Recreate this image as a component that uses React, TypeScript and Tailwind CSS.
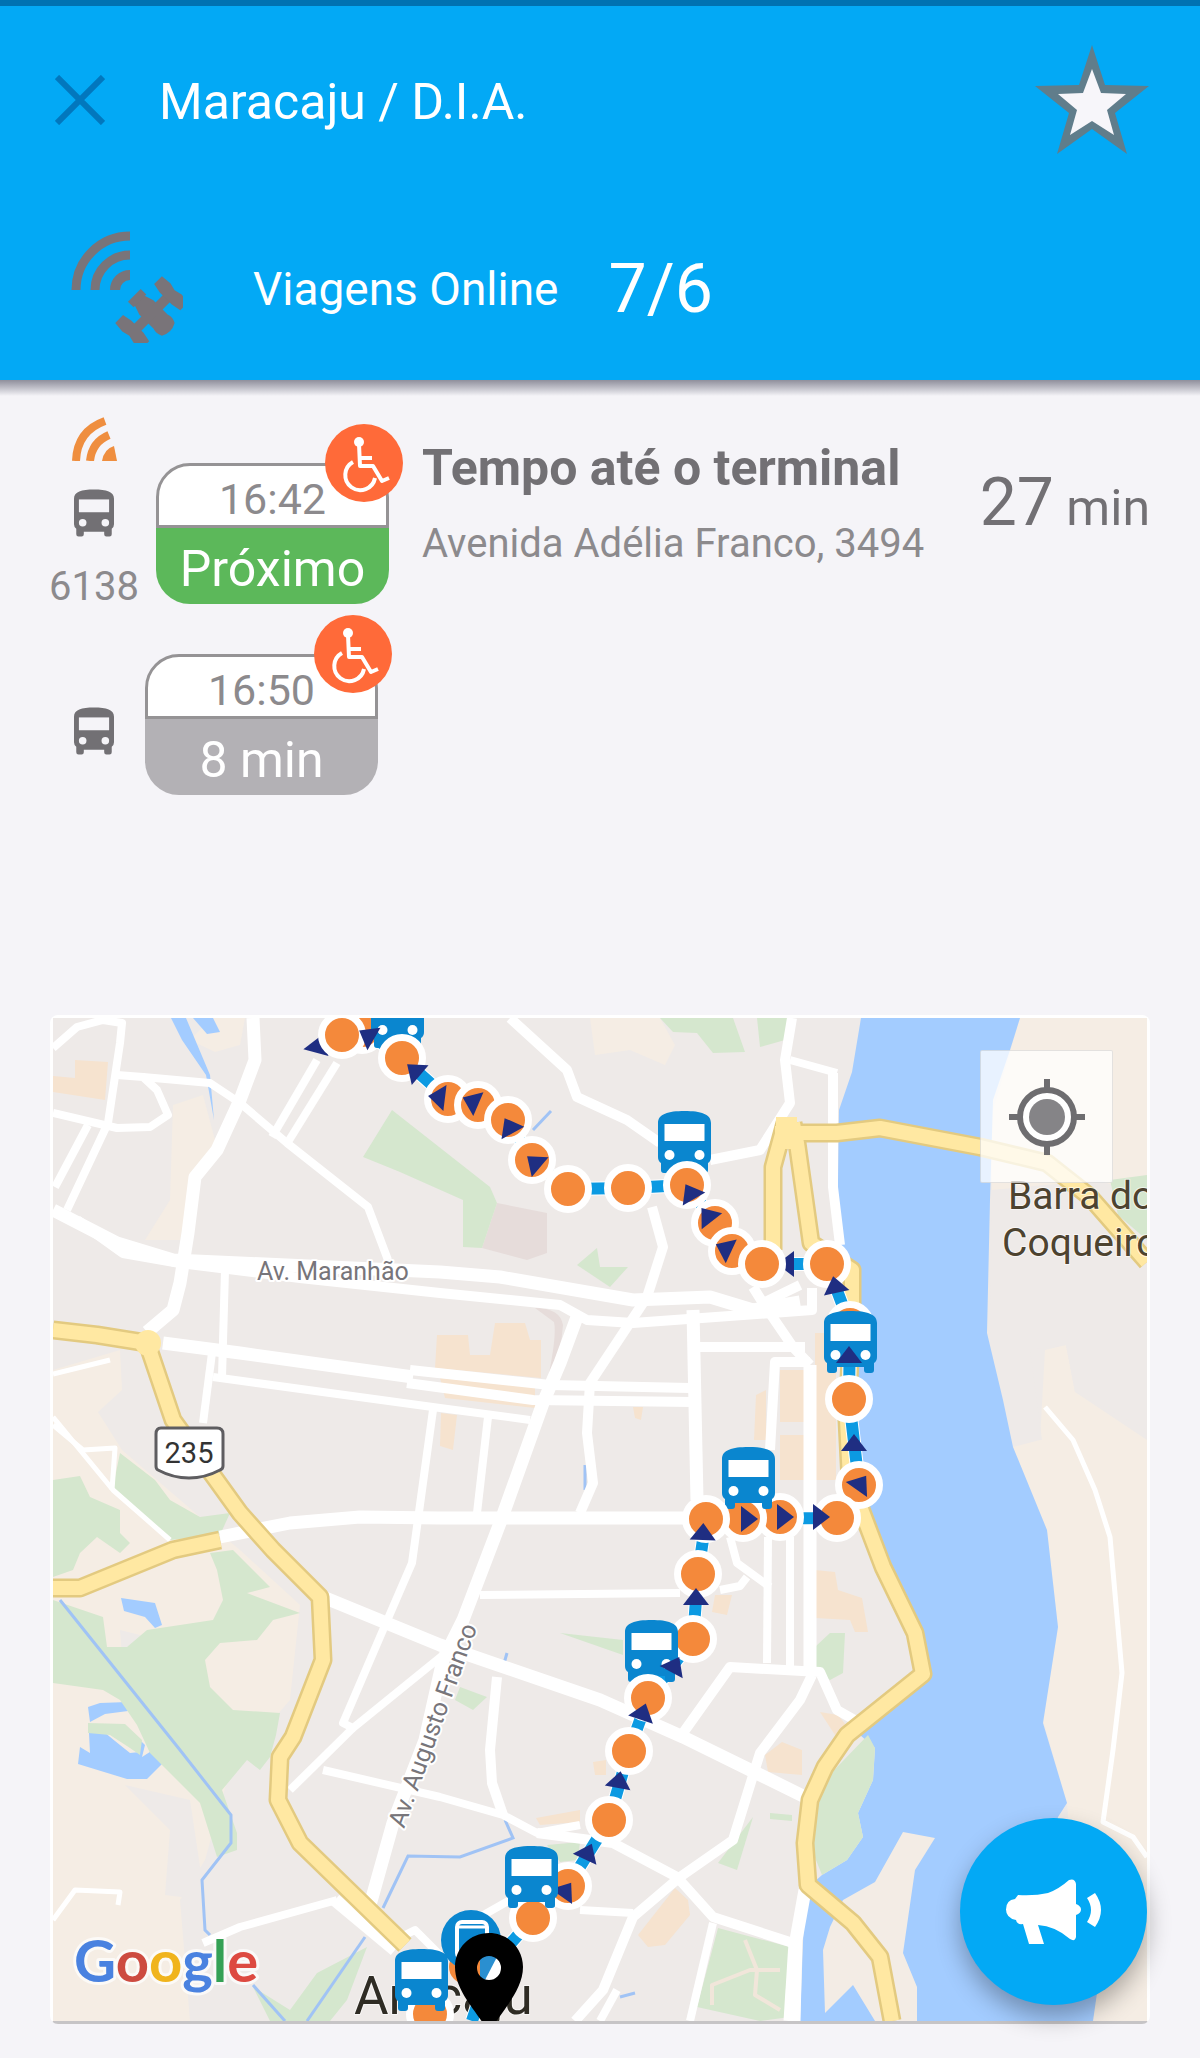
import { useState } from "react";

type Point = [number, number];

// Map drawing units: the visible window starts at 53,1018.
const MAP_VIEWBOX = "53 1018 1094 1003";

const sand = [
  "53,1370 120,1350 122,1390 98,1412 122,1450 200,1517 240,1550 300,1605 290,1700 230,1770 205,1860 180,1900 190,2021 53,2021",
  "1020,1018 1147,1018 1147,1200 1100,1180 992,1190 990,1120",
  "1013,1447 1040,1440 1045,1350 1066,1345 1075,1392 1147,1440 1147,2021 1085,2021 1067,1803 1043,1720 1058,1627 1047,1530",
  "173,1105 203,1095 215,1140 190,1200 180,1240 145,1240 170,1200",
  "190,1040 212,1018 245,1018 240,1045 215,1052",
  "590,1018 660,1018 675,1045 665,1065 630,1050 595,1055",
];

const urban = [
  "992,1210 1147,1215 1147,1430 1075,1392 1066,1345 1030,1350 1042,1440 1010,1440 990,1340",
  "120,1630 160,1640 190,1700 200,1800 150,1750 125,1690",
  "125,1785 190,1800 205,1900 165,1895 170,1830",
];

const peach = [
  "75,1060 108,1062 105,1100 53,1092 53,1076 75,1078",
  "437,1335 468,1335 470,1355 490,1355 495,1323 525,1323 530,1340 541,1340 541,1378 435,1368",
  "440,1378 535,1387 535,1408 445,1398",
  "441,1413 457,1415 453,1450 440,1446",
  "756,1395 766,1390 766,1440 754,1440",
  "780,1370 805,1370 805,1422 780,1422",
  "780,1435 805,1435 805,1480 780,1480",
  "815,1333 836,1333 836,1480 815,1480",
  "815,1570 835,1572 838,1590 862,1598 868,1632 855,1632 850,1620 815,1618",
  "715,1595 732,1595 727,1615 712,1612",
  "536,1818 580,1810 580,1822 540,1825",
  "593,1762 606,1760 606,1775 595,1775",
  "765,1755 782,1742 802,1750 802,1775 768,1772",
  "675,1888 688,1900 690,1915 665,1945 648,1947 638,1935",
  "820,1712 838,1715 850,1730 835,1735",
  "633,1407 643,1407 641,1420 635,1418",
];

const green = [
  "392,1110 490,1187 497,1203 482,1248 463,1247 463,1200 400,1172 363,1157",
  "660,1018 733,1018 745,1052 713,1053 697,1033 673,1032",
  "757,1018 788,1018 785,1040 760,1047",
  "577,1265 597,1248 600,1267 628,1267 610,1287",
  "53,1480 80,1476 90,1497 120,1510 120,1533 130,1543 120,1553 97,1537 80,1553 73,1570 53,1577",
  "120,1453 155,1480 170,1500 200,1517 230,1513 220,1535 170,1540 113,1487",
  "210,1553 233,1550 270,1587 247,1593 300,1613 273,1620 257,1640 220,1643 205,1660 210,1687 233,1710 280,1713 276,1735 270,1757 260,1770 247,1760 222,1790 237,1833 237,1850 217,1857 200,1803 150,1753 137,1725 120,1700 103,1690 53,1683 53,1600 103,1617 107,1647 127,1647 147,1630 213,1620 223,1600 217,1570",
  "88,1723 125,1724 142,1740 140,1755 130,1748 110,1735 88,1733",
  "317,1973 367,1947 347,2000 330,2021 270,2021 253,1987 290,2010",
  "718,1928 790,1947 790,2017 760,2021 697,2007",
  "753,1817 737,1870 718,1863",
  "547,1845 580,1842 578,1860 560,1862",
  "560,1633 623,1640 623,1655",
  "460,1687 487,1697 473,1710 455,1700",
  "830,1633 845,1633 843,1673 830,1680 815,1670 815,1647",
  "868,1735 875,1748 873,1780 858,1813 863,1837 847,1860 822,1875 808,1840 815,1790",
  "770,1813 792,1815 792,1821 770,1819",
  "1110,1180 1147,1175 1147,1240 1118,1215",
];

const water = [
  "861,1018 852,1072 839,1110 837,1250 852,1300 848,1400 855,1500 875,1560 922,1640 926,1680 860,1735 875,1748 873,1780 858,1813 863,1837 847,1860 822,1875 805,1890 800,2021 1093,2021 1097,1993 1040,1900 1058,1817 1067,1803 1043,1723 1058,1627 1047,1530 1013,1447 1003,1400 987,1333 990,1200 993,1100 1010,1050 1020,1018",
  "121,1598 155,1603 162,1625 155,1628 145,1617 124,1611",
  "88,1707 100,1703 128,1702 128,1711 105,1714 90,1722",
  "80,1747 90,1753 89,1733 104,1732 115,1741 130,1753 140,1752 133,1733 145,1745 142,1757 153,1750 163,1763 147,1779 127,1779 78,1764",
  "171,1018 186,1018 210,1075 214,1120 206,1075 182,1040",
  "193,1018 213,1018 220,1032 207,1034",
];

const roads: { width: number; lines: string[] }[] = [
  {
    width: 5,
    lines: [
      "53,1417 113,1490 170,1540",
      "53,1425 83,1450 115,1448 112,1490",
      "1045,1407 1073,1440 1095,1490 1110,1537 1122,1673 1113,1750 1103,1822 1133,1837 1147,1857",
      "53,1920 75,1890 120,1892 118,1905",
      "53,1374 110,1360",
    ],
  },
  {
    width: 8,
    lines: [
      "53,1048 77,1027 103,1020 122,1023 120,1043 108,1123 67,1210",
      "53,1113 117,1128 150,1127 168,1115 157,1090 143,1077 117,1075",
      "143,1077 210,1083 240,1103 287,1143 368,1207 388,1260",
      "88,1125 55,1187",
      "317,1060 272,1137",
      "337,1063 288,1142",
      "225,1270 222,1377",
      "212,1353 203,1423",
      "213,1377 440,1408 530,1420",
      "433,1410 412,1563 383,1630 343,1723 353,1728 443,1655",
      "353,1728 290,1790",
      "488,1417 477,1513",
      "323,1770 440,1797 503,1815 537,1833 580,1825",
      "480,1595 680,1593",
      "580,1910 633,1913",
      "713,1923 690,2021",
      "790,1537 790,1667",
      "768,1537 767,1663",
      "730,1537 737,1563 770,1587",
      "720,1590 740,1586 747,1577",
      "337,1900 240,1927 203,1943",
      "790,1060 837,1073",
      "480,1917 510,1900",
      "405,1935 415,1930 440,1955",
      "617,1990 600,2021",
    ],
  },
  {
    width: 10,
    lines: [
      "77,1220 123,1253 180,1263 300,1278 440,1293 560,1305 587,1320 633,1323 812,1310 812,1288",
      "407,1383 533,1400 693,1402",
      "410,1370 550,1385 690,1388",
      "537,1833 613,1843 677,1877 713,1917 793,1943",
      "497,1677 490,1750 492,1783 503,1815",
      "812,1675 800,1700 760,1753 733,1840 680,1877 633,1917 603,1990 575,2021",
      "510,1018 567,1070 577,1097 627,1120 660,1143",
      "710,1160 760,1150 790,1103 785,1060 792,1018",
      "652,1207 663,1247 647,1297 590,1383 587,1433 593,1483 580,1513",
      "700,1347 805,1347",
      "810,1362 775,1362 770,1450",
      "683,1733 730,1667 820,1672 837,1710 860,1723",
      "833,1073 833,1187 840,1245",
      "753,1287 763,1303 793,1347 810,1365",
      "763,1303 800,1285",
    ],
  },
  {
    width: 13,
    lines: [
      "253,1018 255,1060 240,1100 217,1150 195,1177 188,1233 180,1283 173,1310 147,1332",
      "53,1210 117,1243 173,1260 240,1263 440,1272 500,1277 633,1300 710,1297 753,1310 800,1302",
      "163,1343 240,1353 413,1377",
      "220,1537 290,1523 360,1517 440,1518 700,1518",
      "577,1317 560,1363 543,1403 500,1523 463,1620 443,1660 425,1740 393,1823 370,1905",
      "323,1597 440,1645 600,1700 683,1737 805,1797",
      "693,1310 697,1500",
      "810,1365 810,1667",
      "795,1943 790,2021",
      "805,1890 796,1940 794,2021",
      "335,1900 395,1950",
    ],
  },
];

const highways = [
  "53,1330 97,1335 147,1343 173,1420 240,1513 273,1550 320,1597 323,1660 293,1737 280,1757 278,1800 300,1843 405,1945",
  "53,1588 80,1588 173,1550 220,1540",
  "775,1133 837,1133 880,1128 980,1147 1047,1163 1090,1197 1147,1262",
  "785,1123 773,1167 773,1250",
  "793,1123 797,1143 811,1243 852,1270 852,1320 847,1420 850,1480 883,1567 915,1633 923,1674 847,1735 825,1767 810,1800 805,1843 808,1885 853,1923 880,1957 892,2021",
];

const streams = [
  "60,1600 180,1750 231,1815 231,1843 202,1880 205,1930 210,1935",
  "307,2021 365,1937",
  "253,1985 285,2021",
  "383,1908 408,1856 460,1857 513,1838 505,1820",
  "533,1130 551,1111",
  "503,1667 507,1653",
  "585,1465 585,1490",
  "620,1997 635,1993",
];

const routeLine =
  "342,1035 372,1036 402,1058 448,1099 478,1105 508,1120 532,1160 568,1189 628,1188 687,1185 715,1223 732,1251 762,1264 827,1264 850,1325 849,1399 859,1485 837,1518 706,1519 698,1574 693,1639 648,1698 629,1751 609,1820 568,1886 533,1918 490,1967 472,2021";

const stopsBelow: Point[] = [
  [362, 1030],
  [850, 1325],
  [780, 1517],
  [743, 1518],
  [693, 1639],
  [568, 1886],
  [533, 1918],
  [430, 2014],
];

const stopsAbove: Point[] = [
  [342, 1035],
  [402, 1058],
  [448, 1099],
  [478, 1105],
  [508, 1120],
  [532, 1160],
  [568, 1189],
  [628, 1188],
  [687, 1185],
  [715, 1223],
  [732, 1251],
  [762, 1264],
  [827, 1264],
  [849, 1399],
  [859, 1485],
  [837, 1518],
  [706, 1519],
  [698, 1574],
  [648, 1698],
  [629, 1751],
  [609, 1820],
];

const buses: Point[] = [
  [371, 986],
  [658, 1111],
  [824, 1311],
  [722, 1447],
  [625, 1620],
  [505, 1846],
  [395, 1949],
];

// x, y, heading in degrees
const hiddenArrows: [number, number, number][] = [
  [318, 1045, 15],
  [786, 1264, -90],
  [566, 1890, 35],
];

const arrows: [number, number, number][] = [
  [367, 1035, -60],
  [414, 1070, -50],
  [437, 1097, -83],
  [471, 1101, -67],
  [509, 1126, -29],
  [534, 1162, -50],
  [690, 1192, -30],
  [707, 1215, -38],
  [724, 1248, -65],
  [835, 1285, -12],
  [849, 1355, 0],
  [854, 1443, 0],
  [861, 1483, 35],
  [821, 1517, 90],
  [785, 1517, 90],
  [749, 1519, 90],
  [703, 1532, 2],
  [696, 1597, 0],
  [675, 1665, 28],
  [643, 1712, 18],
  [619, 1780, 10],
  [588, 1852, 25],
];

const departures = [
  { time: "16:42", status: "Próximo", statusClass: "bg-[#5cb85a]", online: true, vehicle: "6138" },
  { time: "16:50", status: "8 min", statusClass: "bg-[#b3b1b5]", online: false, vehicle: "" },
];

function BusShape({ detail = "#fff" }: { detail?: string }) {
  return (
    <>
      <path d="M0 12C0 3 10 0 26.500 0S53 3 53 12V46Q53 50 50 52V59Q50 62 47 62H43Q40 62 40 59V56H13V59Q13 62 10 62H6Q3 62 3 59V52Q0 50 0 46Z" />
      <path d="M6.500 13H46.500V30H6.500Z" fill={detail} />
      <circle cx="11.500" cy="44" r="5" fill={detail} />
      <circle cx="41.500" cy="44" r="5" fill={detail} />
    </>
  );
}

function BusIcon() {
  return (
    <svg viewBox="0 0 53 62" className="h-12 w-10" fill="#727074" aria-hidden="true">
      <BusShape detail="#f5f4f8" />
    </svg>
  );
}

function SignalIcon() {
  return (
    <svg viewBox="0 0 45 44" className="h-11 w-[45px]" aria-hidden="true">
      <path d="M30 44H45L42 29Q32 32 30 44Z" fill="#ef8e3f" />
      <path d="M18 44Q20 25 37 18M4 44Q5 14 33 4" fill="none" stroke="#ef8e3f" strokeWidth="8" />
    </svg>
  );
}

function SatelliteIcon() {
  return (
    <svg viewBox="0 0 112 112" className="size-28 shrink-0" aria-hidden="true">
      <g fill="none" stroke="#797479" strokeWidth="9">
        <path d="M5 59A54 54 0 0 1 59 5" />
        <path d="M24 59A35 35 0 0 1 59 24" />
        <path d="M44 59A15 15 0 0 1 59 44" strokeWidth="10" />
      </g>
      <g fill="#797479" transform="translate(81 82) rotate(-45)">
        <path d="M-6 -20H6L10 -8V12Q12 18 9 23Q0 28 -9 23Q-12 18 -10 12V-8Z" />
        <path d="M-9 -25H9V-17H-9Z" />
        <path d="M-22 -5H22V5H-22Z" />
        <path d="M20 -9L22 -19H33L34 -8L32 0L34 8L33 18H22L20 8Z" />
        <path d="M-20 -9L-22 -19H-33L-34 -8L-32 0L-34 8L-33 18H-22L-20 8Z" />
      </g>
    </svg>
  );
}

function AccessibleBadge() {
  return (
    <svg
      viewBox="0 0 78 78"
      className="absolute -top-[39px] -right-3.5 size-[78px]"
      role="img"
      aria-label="Veículo acessível"
    >
      <circle cx="39" cy="39" r="39" fill="#ff6a39" />
      <circle cx="34" cy="18" r="5" fill="#fff" />
      <g fill="none" stroke="#fff" strokeWidth="4" strokeLinejoin="round">
        <path d="M34 20L35 42H48L57 57 64 54" />
        <path d="M34 34H47" />
        <path d="M28 38A15 15 0 1 0 50 54" />
      </g>
    </svg>
  );
}

function TimeChip({ time, status, statusClass }: { time: string; status: string; statusClass: string }) {
  return (
    <div className="relative h-[141px] w-[233px] shrink-0 text-center">
      <div className="h-[65px] rounded-t-[34px] border-[3px] border-[#959395] bg-white text-[43px] leading-[66px] text-[#8c8a8d]">
        {time}
      </div>
      <div className={`h-[76px] rounded-b-[34px] text-[50px] leading-[82px] text-white ${statusClass}`}>
        {status}
      </div>
      <AccessibleBadge />
    </div>
  );
}

function Stop({ at }: { at: Point }) {
  return <circle cx={at[0]} cy={at[1]} r="20.500" fill="#f4893b" stroke="#fff" strokeWidth="7" />;
}

function Arrow({ at }: { at: [number, number, number] }) {
  return (
    <path
      d="M0 -9L13 8H-13Z"
      fill="#1f2e82"
      transform={`translate(${at[0]} ${at[1]}) rotate(${at[2]})`}
    />
  );
}

function RouteMap() {
  return (
    <svg
      viewBox={MAP_VIEWBOX}
      className="block h-auto w-full bg-[#eeeae8]"
      fontFamily="Roboto, sans-serif"
      role="img"
      aria-label="Mapa da linha"
    >
      {sand.map((points) => (
        <polygon key={points} points={points} fill="#f5ede4" />
      ))}
      {urban.map((points) => (
        <polygon key={points} points={points} fill="#eeeae8" />
      ))}
      {peach.map((points) => (
        <polygon key={points} points={points} fill="#f6e3cf" />
      ))}
      <polygon points="497,1203 547,1213 547,1253 527,1260 482,1248" fill="#e6dcda" />
      <path d="M535 1308Q560 1308 563 1325Q562 1350 548 1378Q557 1335 554 1322Z" fill="#e6dcda" />
      {water.map((points) => (
        <polygon key={points} points={points} fill="#a3ccff" />
      ))}
      {green.map((points) => (
        <polygon key={points} points={points} fill="#d5e7ce" />
      ))}
      <polygon
        points="903,1832 935,1838 915,1870 903,1953 917,1987 917,2021 875,2021 853,1985 825,2013 823,1950 830,1927 843,1900 875,1882"
        fill="#f3ece5"
      />
      {streams.map((points) => (
        <polyline key={points} points={points} fill="none" stroke="#a0c3f5" strokeWidth="3" />
      ))}
      <g fill="none" stroke="#fff" strokeLinejoin="round">
        {roads.map((group) =>
          group.lines.map((points) => <polyline key={points} points={points} strokeWidth={group.width} />)
        )}
        <path d="M712 2005V1985L750 1970 780 1970M745 1940L757 1970 755 1995 780 2010" stroke="#f1e6da" strokeWidth="4" />
      </g>
      <g fill="none" strokeLinejoin="round">
        {highways.map((points) => (
          <polyline key={points} points={points} stroke="#e3ca80" strokeWidth="19" />
        ))}
        {highways.map((points) => (
          <polyline key={points} points={points} stroke="#ffe8a2" strokeWidth="14" />
        ))}
        <path d="M776 1133H797" stroke="#ffe8a2" strokeWidth="32" />
      </g>
      <circle cx="148" cy="1343" r="13" fill="#ffe8a2" />

      <g stroke="#fff" strokeWidth="4" strokeLinejoin="round" paintOrder="stroke">
        <text x="257" y="1280" fontSize="25" fill="#77757a">
          Av. Maranhão
        </text>
        <text fontSize="25" fill="#77757a" transform="translate(404 1829) rotate(-70)">
          Av. Augusto Franco
        </text>
        <g strokeWidth="2" strokeOpacity="0.600">
          <text x="1008" y="1209" fontSize="39" fill="#4d4330">
            Barra do
          </text>
          <text x="1002" y="1256" fontSize="39" fill="#4d4330">
            Coqueiro
          </text>
          <text x="354" y="2014" fontSize="53" fill="#2f2c24">
            Aracaju
          </text>
        </g>
      </g>

      <path
        d="M161 1428H217Q223 1428 223 1434V1466Q223 1469 220 1470Q205 1478 189 1478Q173 1478 158 1470Q156 1469 156 1466V1434Q156 1428 161 1428Z"
        fill="#fff"
        stroke="#5e5d60"
        strokeWidth="3"
      />
      <text x="189" y="1463" fontSize="29" textAnchor="middle" fill="#333">
        235
      </text>

      <polyline points={routeLine} fill="none" stroke="#fff" strokeWidth="14" />
      <circle cx="466" cy="1967" r="17" fill="#f4893b" />
      <polyline points={routeLine} fill="none" stroke="#0c9ae2" strokeWidth="12" />
      {hiddenArrows.slice(0, 2).map((at) => (
        <Arrow key={at.join()} at={at} />
      ))}
      {stopsBelow.map((at) => (
        <Stop key={at.join()} at={at} />
      ))}
      <Arrow at={hiddenArrows[2]} />
      <circle cx="471" cy="1940" r="30" fill="#0a86cf" />
      <rect x="457" y="1922" width="30" height="36" rx="5" fill="none" stroke="#fff" strokeWidth="4" />
      <path d="M457 1927H487" stroke="#fff" strokeWidth="3" />
      {buses.map(([x, y]) => (
        <g key={`${x}-${y}`} transform={`translate(${x} ${y})`} fill="#0a86cf">
          <BusShape />
        </g>
      ))}
      {stopsAbove.map((at) => (
        <Stop key={at.join()} at={at} />
      ))}
      {arrows.map((at) => (
        <Arrow key={at.join()} at={at} />
      ))}
      <circle cx="489" cy="1968" r="13" fill="#fff" />
      <path d="M498 1955L484 1982 476 1975 480 1955Z" fill="#2a8fd0" />
      <path d="M476 1960H480V1976H476Z" fill="#f4893b" />
      <path
        fillRule="evenodd"
        d="M489 1933C508 1933 523 1948 523 1967C523 1993 497 2015 489 2034C481 2015 455 1993 455 1967C455 1948 470 1933 489 1933ZM489 1956A12 12 0 1 0 489 1980A12 12 0 1 0 489 1956Z"
      />
      <text
        x="74"
        y="1982"
        fontSize="58"
        fontFamily="Lato, sans-serif"
        fontWeight="700"
        stroke="#fff"
        strokeOpacity="0.700"
        strokeWidth="6"
        strokeLinejoin="round"
        paintOrder="stroke"
      >
        <tspan fill="#4a82e0">G</tspan>
        <tspan fill="#cd4b40">o</tspan>
        <tspan fill="#f0b41d">o</tspan>
        <tspan fill="#4a82e0">g</tspan>
        <tspan fill="#35a155">l</tspan>
        <tspan fill="#dd4a41">e</tspan>
      </text>
    </svg>
  );
}

export default function App() {
  const [favorite, setFavorite] = useState(true);

  return (
    <div className="min-h-screen bg-[#f5f4f8] pb-[34px] font-[Roboto,sans-serif]">
      <header className="relative border-t-[6px] border-[#0072b1] bg-[#03a9f5] pt-[39px] pr-[50px] pb-[38px] pl-[55px] text-white">
        <div className="flex h-[110px] items-center">
          <button type="button" aria-label="Fechar" className="mr-[54px]">
            <svg viewBox="0 0 50 50" className="size-[50px]" stroke="#0277bd" strokeWidth="6">
              <path d="M2 2L48 48M48 2L2 48" />
            </svg>
          </button>
          <h1 className="pt-1 text-[50px] leading-[56px]">Maracaju / D.I.A.</h1>
          <button
            type="button"
            aria-label="Favorito"
            aria-pressed={favorite}
            onClick={() => setFavorite(!favorite)}
            className="ml-auto"
          >
            <svg viewBox="0 0 116 110" className="h-[110px] w-[116px]">
              <path
                d="M58 0L71 40 115 41 81 68 93 109 58 84 23 109 35 68 1 41 45 40Z"
                fill="#607d8b"
              />
              <path
                d="M58 24L67 48 92 49 73 65 80 90 58 76 36 90 43 65 24 49 49 48Z"
                fill={favorite ? "#f7f6fa" : "#03a9f5"}
              />
            </svg>
          </button>
        </div>
        <div className="mt-[76px] flex h-[111px] items-center pl-4">
          <SatelliteIcon />
          <p className="ml-[70px] pt-1 text-[46px] leading-[52px]">Viagens Online</p>
          <p className="ml-[50px] pt-1 text-[68px] leading-[72px]">7/6</p>
        </div>
        <div className="absolute inset-x-0 top-full h-4 bg-linear-to-b from-[#8f8f9c] to-[#f5f4f8]" />
      </header>

      <main>
        <ul className="pr-[50px] pl-[50px] pt-9">
          {departures.map((item) => (
            <li
              key={item.time}
              className={item.online ? "flex h-[192px] items-start" : "mt-[46px] flex items-center"}
            >
              {item.online ? (
                <>
                  <div className="mr-[18px] flex w-[88px] shrink-0 flex-col items-center gap-7 pt-px">
                    <SignalIcon />
                    <BusIcon />
                    <span className="text-[40px] leading-[44px] text-[#8c8a8d]">{item.vehicle}</span>
                  </div>
                  <div className="pt-[47px]">
                    <TimeChip time={item.time} status={item.status} statusClass={item.statusClass} />
                  </div>
                  <div className="ml-[33px] whitespace-nowrap pt-6">
                    <h2 className="text-[50px] leading-[56px] font-bold text-[#727074]">Tempo até o terminal</h2>
                    <p className="mt-6 text-[40px] leading-[48px] text-[#8c8a8d]">
                      Avenida Adélia Franco, 3494
                    </p>
                  </div>
                  <p className="ml-auto whitespace-nowrap pt-[54px] text-[50px] leading-[66px] text-[#727074]">
                    <span className="text-[66px]">27</span> min
                  </p>
                </>
              ) : (
                <>
                  <div className="mr-[7px] flex w-[88px] shrink-0 justify-center pt-3">
                    <BusIcon />
                  </div>
                  <TimeChip time={item.time} status={item.status} statusClass={item.statusClass} />
                </>
              )}
            </li>
          ))}
        </ul>

        <section className="relative mx-[50px] mt-[220px] rounded-lg border-[3px] border-white border-b-[#c6c4c6]">
          <RouteMap />
          <button
            type="button"
            aria-label="Minha localização"
            className="absolute top-8 right-[34px] flex size-[133px] items-center justify-center rounded-xs border border-black/10 bg-white/75"
          >
            <svg viewBox="0 0 78 78" className="size-[78px]">
              <g fill="none" stroke="#6e6d70" strokeWidth="6">
                <circle cx="39" cy="39" r="27" fill="#fff" />
                <path d="M39 1V13M39 65V77M1 39H13M65 39H77" />
              </g>
              <circle cx="39" cy="39" r="18" fill="#858487" />
            </svg>
          </button>
          <button
            type="button"
            aria-label="Avisos"
            className="absolute right-0 bottom-4 flex size-[187px] items-center justify-center rounded-full bg-[#03a9f5] shadow-[0_12px_24px_rgba(0,0,0,0.3)]"
          >
            <svg viewBox="0 0 97 66" className="h-[66px] w-[97px]" fill="#fff">
              <path d="M13 16Q30 17 43 14Q54 10 64 1Q70 -1 71 5V25Q76 27 76 30.500Q76 34 71 36V58Q70 63 65 60Q50 47 33 46L39 65H24L18 45Q12 46 11 41Q1 39 1 30.500Q1 21 10 20Z" />
              <path d="M90 14Q102 31 90 48L82 43Q90 31 82 19Z" />
            </svg>
          </button>
        </section>
      </main>
    </div>
  );
}
